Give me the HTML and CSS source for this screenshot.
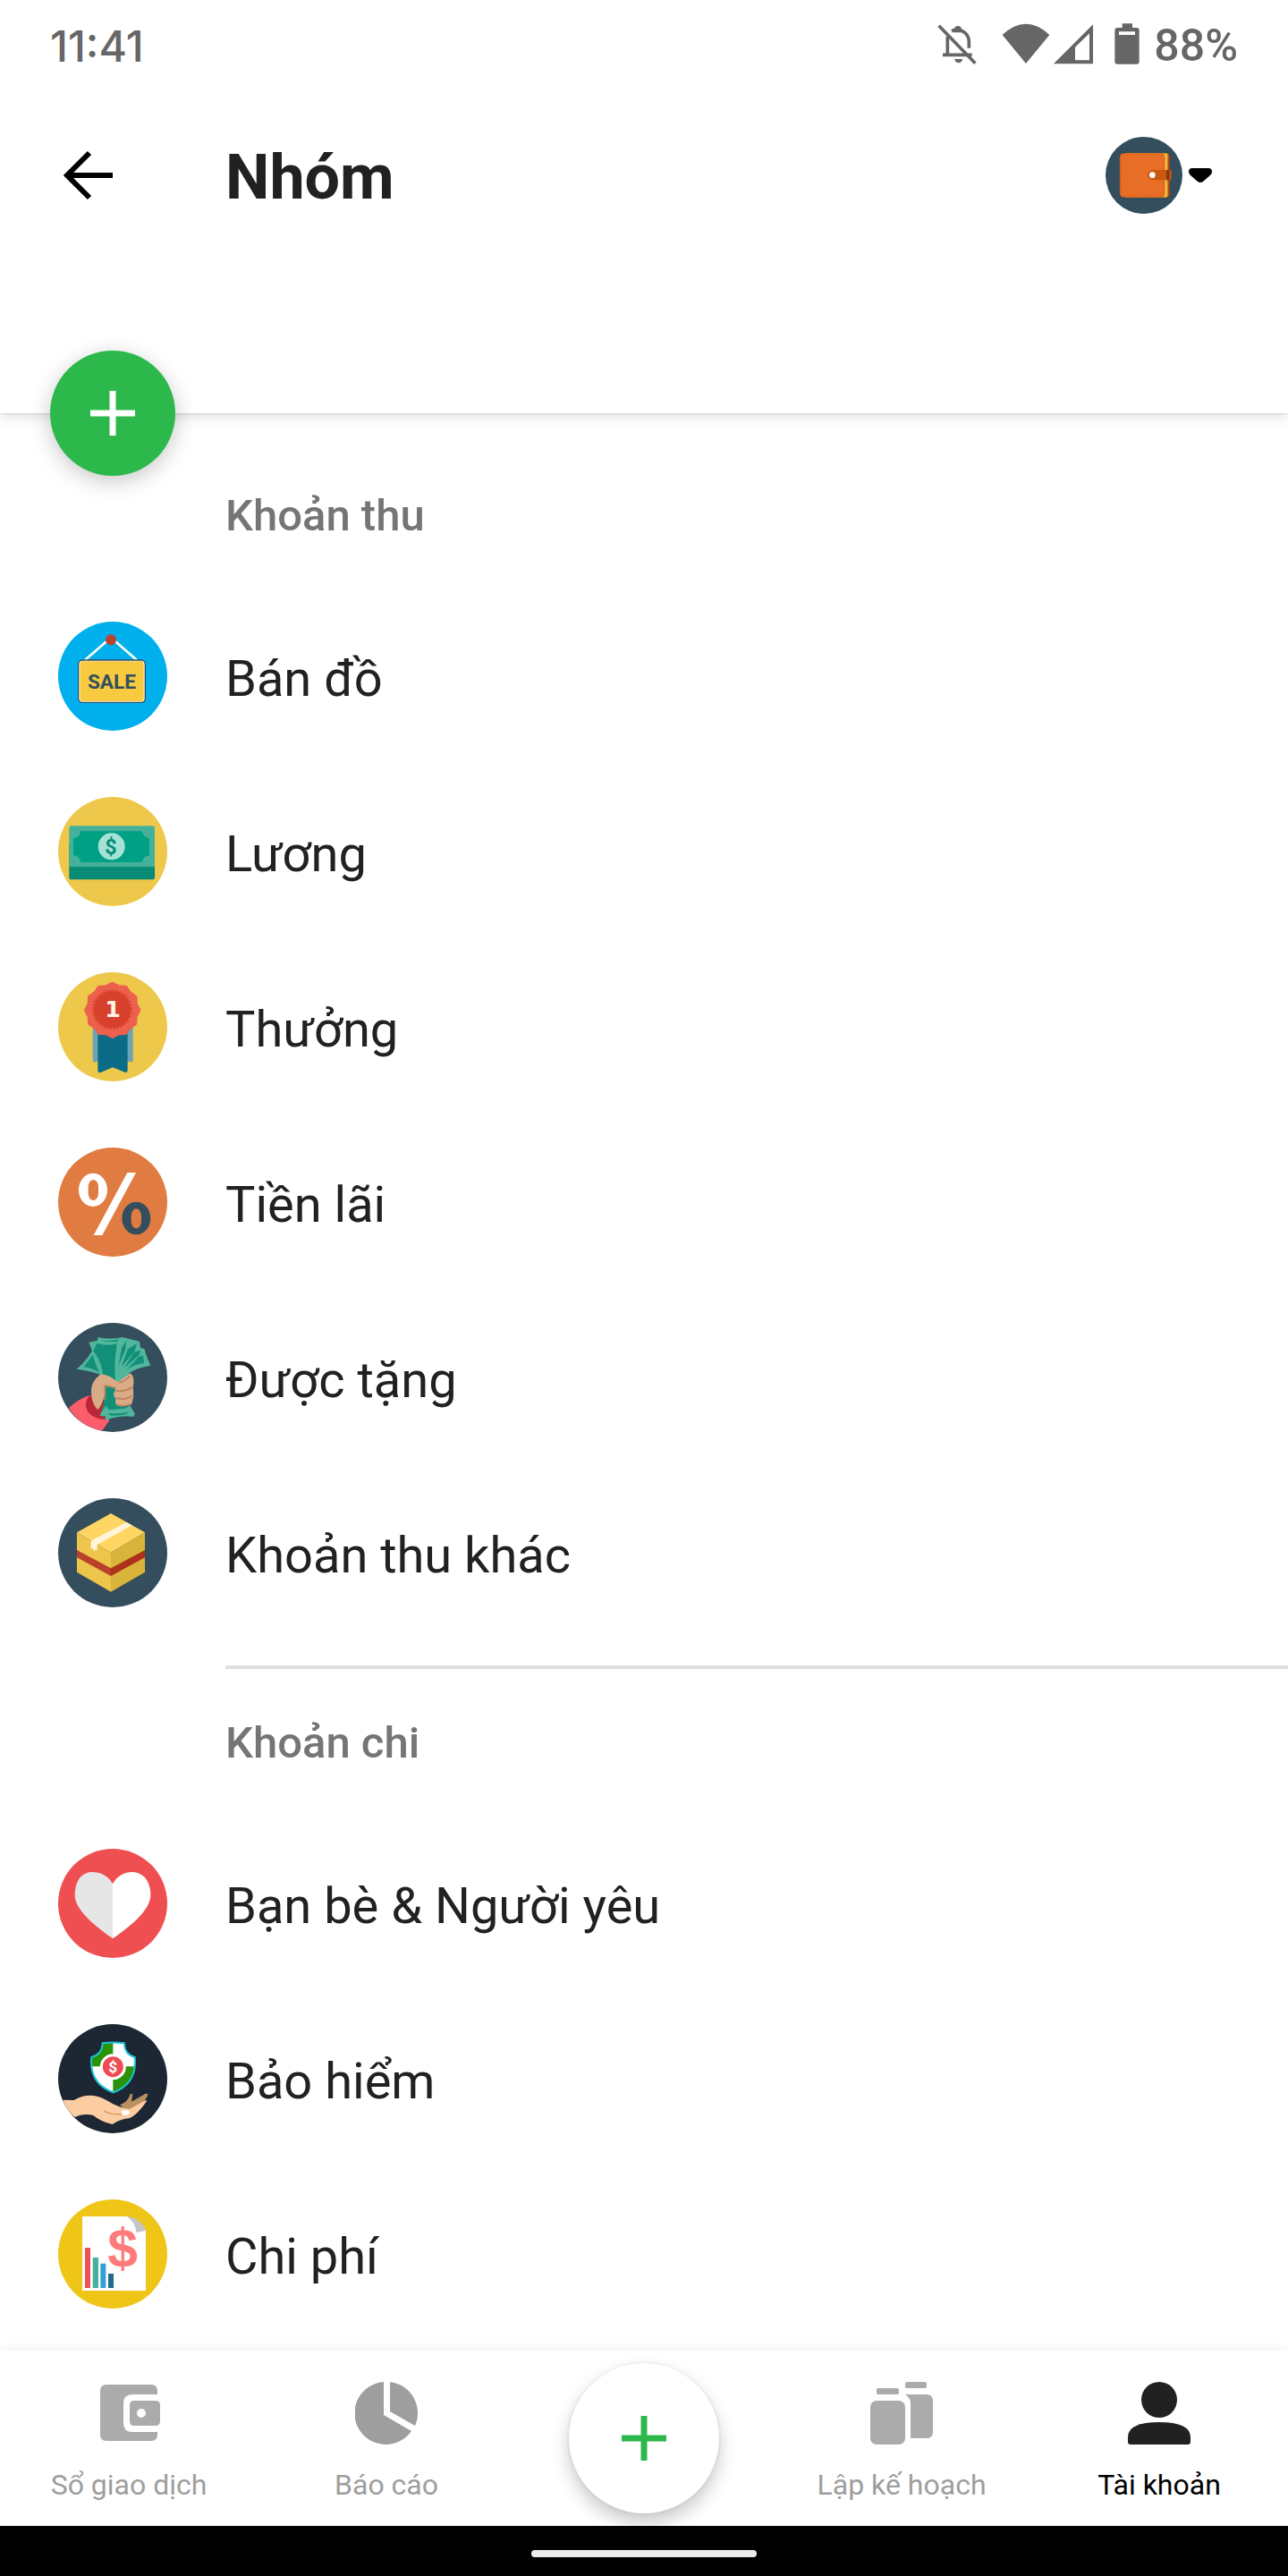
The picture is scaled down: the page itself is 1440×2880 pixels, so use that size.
FILE: index.html
```html
<!DOCTYPE html>
<html lang="vi">
<head>
<meta charset="utf-8">
<meta name="viewport" content="width=device-width, initial-scale=1">
<title>Nhóm</title>
<link rel="stylesheet" href="styles.css">
</head>
<body>
<header class="top">
  <div class="status">
    <time class="clock">11:41</time>
    <div class="status-icons">
      <svg class="bell" width="44" height="46" viewBox="0 0 132 138" fill="none" stroke="#666" stroke-width="11" aria-hidden="true"><path d="M5 8 127 134M34 44V106M18 106H116M48 26C75 12 106 33 106 62V83"/><path d="M56 22A12 12 0 0 1 82 22L86 31 52 31ZM58 120H84A13 13 0 0 1 58 120" fill="#666" stroke="none"/></svg>
      <svg class="wifi" width="54" height="46" viewBox="0 0 162 138" fill="#666" aria-hidden="true"><path d="M2 39Q81-34 160 39L81 135Z"/></svg>
      <svg class="signal" width="44" height="46" viewBox="0 0 132 138" fill="#666" aria-hidden="true"><path fill-rule="evenodd" d="M0 136 132 4V136ZM72 80V124H120V34Z"/></svg>
      <svg class="battery" width="28" height="46" viewBox="0 0 84 138" fill="#666" aria-hidden="true"><path fill-rule="evenodd" d="M26 1H60V15H74Q83 15 83 24V128Q83 137 74 137H10Q1 137 1 128V24Q1 15 10 15H26ZM15 28V39H69V28Z"/></svg>
      <span class="percent">88%</span>
    </div>
  </div>
  <div class="toolbar">
    <button class="icon-button" type="button" aria-label="Quay lại">
      <svg width="56" height="56" viewBox="0 0 56 56" fill="none" stroke="#000" stroke-width="6" aria-hidden="true"><path d="M56 28H6M30 3 5 28 30 53"/></svg>
    </button>
    <h1 class="title">Nhóm</h1>
    <button class="wallet-picker" type="button" aria-label="Chọn ví">
      <svg width="86" height="86" viewBox="648 459 258 258" aria-hidden="true">
        <circle cx="777" cy="588" r="129" fill="#354e5d"/>
        <rect x="720" y="514" width="143" height="148" rx="12" fill="#b9460e"/>
        <path d="M715 514H851Q857 514 857 524V652Q857 662 851 662H715Z" fill="#d8a52d"/>
        <path d="M850 516V660" stroke="#f2bd42" stroke-width="8"/>
        <rect x="697" y="515" width="149" height="146" rx="12" fill="#e96f28" stroke="#d45c18" stroke-width="2"/>
        <rect x="705" y="522" width="134" height="132" rx="10" fill="none" stroke="#d9621e" stroke-width="2" stroke-dasharray="5 3"/>
        <path d="M806 570H864Q869 570 869 576V598Q869 604 864 604H806A17 17 0 0 1 806 570" fill="#cc5710"/>
        <path d="M852 570H862V604H852Z" fill="#86390e"/><circle cx="805" cy="587" r="10" fill="#fff"/>
      </svg>
      <svg width="26" height="16" viewBox="0 0 26 16" aria-hidden="true"><path d="M4 0H22Q26 0 26 4 26 6 24 8L16 15Q13 17 10 15L2 8Q0 6 0 4 0 0 4 0"/></svg>
    </button>
  </div>
  <button class="add" type="button" aria-label="Thêm nhóm">
    <svg width="50" height="50" viewBox="0 0 50 50" stroke="#fff" stroke-width="7" aria-hidden="true"><path d="M25 0V50M0 25H50"/></svg>
  </button>
</header>

<main class="content">
  <section class="group">
    <h2 class="group-title">Khoản thu</h2>
    <ul class="list">
      <li><a class="row" href="#ban-do">
        <svg class="badge" viewBox="45 45 366 366" aria-hidden="true">
          <circle cx="228" cy="228" r="183" fill="#00b0ec"/>
          <path d="M135 174 222 98 309 174" fill="none" stroke="#fff" stroke-width="8"/>
          <circle cx="222" cy="106" r="18" fill="#ba4330"/>
          <rect x="113" y="174" width="224" height="142" rx="14" fill="#fff" stroke="#354e5d" stroke-width="4"/>
          <rect x="118" y="178" width="214" height="134" rx="10" fill="#f7ca40"/>
          <text class="sale" x="225" y="269" text-anchor="middle">SALE</text>
        </svg><span class="name">Bán đồ</span></a></li>
      <li><a class="row" href="#luong">
        <svg class="badge" viewBox="45 47 366 366" aria-hidden="true">
          <circle cx="228" cy="230" r="183" fill="#eec84b"/>
          <rect x="82" y="200" width="287" height="124" rx="8" fill="#008771"/>
          <path d="M83 289H368M83 298H368M83 307H368M83 316H368" stroke="#17967e" stroke-width="3"/>
          <path d="M90 144H361Q369 144 369 152V282H82V152Q82 144 90 144" fill="#46b19a"/>
          <path d="M121 162H327A25 25 0 0 0 351 185V243A25 25 0 0 0 327 266H121A25 25 0 0 0 96 243V185A25 25 0 0 0 121 162" fill="#00a084"/>
          <circle cx="224" cy="213" r="45" fill="#a5e3d8"/>
          <text class="dollar" x="222" y="238" font-size="70" fill="#078d76" text-anchor="middle">$</text>
        </svg><span class="name">Lương</span></a></li>
      <li><a class="row" href="#thuong">
        <svg class="badge" viewBox="45 51 366 366" aria-hidden="true">
          <circle cx="228" cy="234" r="183" fill="#eec84b"/>
          <path d="M161 220H296V344Q296 354 287 352L275 348H182L170 352Q161 354 161 344Z" fill="#69a4b8"/>
          <path d="M178 220H278V379Q278 389 268 386L228 370 188 387Q178 390 178 379Z" fill="#0b6c87"/>
          <path d="M227 90 248 101 271 102 284 121 303 134 304 157 315 178 304 199 303 222 284 235 271 254 248 255 227 266 206 255 183 254 170 235 151 222 150 199 139 178 150 157 151 134 170 121 183 102 206 101Z" fill="#ec604d" stroke="#ec604d" stroke-width="14" stroke-linejoin="round"/>
          <circle cx="226" cy="176" r="61" fill="#d7402b"/><circle cx="226" cy="176" r="63" fill="none" stroke="#d7402b" stroke-width="8" stroke-dasharray="6 5"/>
          <text class="first" x="228" y="202" text-anchor="middle">1</text>
        </svg><span class="name">Thưởng</span></a></li>
      <li><a class="row" href="#tien-lai">
        <svg class="badge" viewBox="45 39 366 366" aria-hidden="true">
          <circle cx="228" cy="222" r="183" fill="#e07c41"/>
          <path d="M277 123H306L193 333H164Z" fill="#fff"/>
          <ellipse cx="162" cy="181" rx="48" ry="56" fill="#fff"/><rect x="146" y="147" width="34" height="69" rx="17" ry="24" fill="#e07c41"/>
          <ellipse cx="307" cy="276" rx="48" ry="55" fill="#354e5d"/><rect x="290" y="244" width="34" height="66" rx="17" ry="24" fill="#e07c41"/>
        </svg><span class="name">Tiền lãi</span></a></li>
      <li><a class="row" href="#duoc-tang">
        <svg class="badge" viewBox="45 42 366 366" aria-hidden="true">
          <circle cx="228" cy="225" r="183" fill="#354e5d"/>
          <path d="M80 328Q113 296 151 285L217 370 192 404Q120 390 80 328" fill="#fc5d6b"/>
          <path d="M151 285Q128 310 144 340 165 366 207 366L196 300Z" fill="#b92736"/>
          <path d="M107 197Q141 169 159 136L148 107 178 101V90Q219 99 260 90L318 104 321 125 335 130Q338 149 355 185 307 192 284 210L239 290H196L183 214Q145 201 107 197" fill="#51b79c"/>
          <path d="M163 136 175 110Q212 122 242 111L240 130Q231 180 238 242L196 218Q191 171 163 136M131 190 161 149Q170 181 183 208 159 194 131 190M182 98Q220 107 250 97L242 105Q211 108 182 98M258 126 274 101 270 132 248 185ZM279 130 310 110 301 137 257 190ZM298 142 322 133 316 151 267 193ZM314 157 330 151 333 177Q300 181 274 200Z" fill="#128f79"/>
          <path d="M201 245H270L271 320 302 346 299 356Q244 351 203 369V355H184Q203 315 201 245" fill="#128f79"/>
          <path d="M204 320 215 334 270 329 286 319 302 346 299 356Q244 351 203 369L204 355 184 353Z" fill="#51b79c"/><path d="M214 344Q250 349 286 340L270 349Q239 355 218 352Z" fill="#128f79"/>
          <path d="M178 334Q154 309 156 266 158 238 184 217 201 211 220 223L246 240 287 211Q304 222 296 260 301 288 291 316 267 325 245 320 233 309 239 296 225 283 236 269L238 258 204 254Q202 307 178 334" fill="#d9aa86"/>
          <path d="M249 242Q267 241 287 219M238 269Q269 275 293 258M239 294Q270 303 293 286M202 300V252Q222 254 238 262M242 317Q266 324 291 314" fill="none" stroke="#b9825d" stroke-width="5"/>
        </svg><span class="name">Được tặng</span></a></li>
      <li><a class="row" href="#khoan-thu-khac">
        <svg class="badge" viewBox="45 45 366 366" aria-hidden="true">
          <circle cx="228" cy="228" r="183" fill="#354e5d"/>
          <path d="M222 96 336 160 222 227 108 160Z" fill="#ffd663"/>
          <path d="M108 160 222 227V359L108 293Z" fill="#eec54b"/><path d="M222 227 336 160V293L222 359Z" fill="#d9b43a"/>
          <path d="M108 219 222 280V306L108 244Z" fill="#b9412b"/><path d="M222 280 336 219V244L222 306Z" fill="#ac321c"/>
          <path d="M155 188 274 126 293 136 176 201V223L170 216 167 225 162 213 155 217Z" fill="#fff5d9"/>
        </svg><span class="name">Khoản thu khác</span></a></li>
    </ul>
  </section>

  <section class="group">
    <h2 class="group-title">Khoản chi</h2>
    <ul class="list">
      <li><a class="row" href="#ban-be">
        <svg class="badge" viewBox="45 51 366 366" aria-hidden="true">
          <circle cx="228" cy="234" r="183" fill="#ef4f50"/>
          <path d="M228 168C213 142 187 129 160 129 122 129 101 161 101 207 101 253 163 307 228 352Z" fill="#e6e6e6"/>
          <path d="M228 168C243 142 268 129 292 129 332 129 355 161 355 207 355 253 294 307 228 352Z" fill="#fff"/>
        </svg><span class="name">Bạn bè &amp; Người yêu</span></a></li>
      <li><a class="row" href="#bao-hiem">
        <svg class="badge" viewBox="45 39 366 366" aria-hidden="true">
          <circle cx="228" cy="222" r="183" fill="#1c2733"/>
          <path d="M194 103Q229 98 267 103 267 140 302 150 311 238 230 268 148 238 157 150 193 140 194 103" fill="#fff"/>
          <path d="M194 103Q212 100 229 101V181H157V150Q193 140 194 103M229 181H302Q298 245 229 267Z" fill="#2a9308"/>
          <path d="M194 103Q229 98 267 103 267 140 302 150 311 238 230 268 148 238 157 150 193 140 194 103Z" fill="none" stroke="#19c5db" stroke-width="6"/>
          <circle cx="229" cy="182" r="39" fill="#ef4b55" stroke="#fff" stroke-width="9"/>
          <text class="dollar" x="229" y="200" font-size="52" fill="#fff" text-anchor="middle">$</text>
          <path d="M252 310Q280 300 287 273L295 274 291 299 338 272 347 274Q330 318 272 328Z" fill="#bd9061"/>
          <path d="M61 293 98 294Q151 263 207 294 246 319 284 324L340 293 342 298Q310 344 285 354 249 359 227 375 187 366 163 345 128 336 101 351 73 328 61 293" fill="#fccca3"/>
          <path d="M199 330Q222 345 263 340" fill="none" stroke="#db9452" stroke-width="4"/><rect x="257" y="328" width="27" height="16" rx="7" fill="#fff"/>
        </svg><span class="name">Bảo hiểm</span></a></li>
      <li><a class="row" href="#chi-phi">
        <svg class="badge" viewBox="45 42 366 366" aria-hidden="true">
          <circle cx="228" cy="225" r="183" fill="#efc517"/>
          <path d="M126 99H276Q324 111 339 146V348H126Z" fill="#fff"/>
          <path d="M276 99Q324 106 339 146L307 153Q305 120 276 99" fill="#c5c5c5"/>
          <path d="M135 204H153V339H135Z" fill="#ef5052"/><path d="M161 237H180V339H161Z" fill="#45b29d"/><path d="M187 257H205V339H187Z" fill="#349fd7"/><path d="M213 291H231V339H213Z" fill="#226b8c"/>
          <text class="cost" x="261" y="266" text-anchor="middle">$</text>
        </svg><span class="name">Chi phí</span></a></li>
    </ul>
  </section>
</main>

<footer class="bottom">
  <nav class="tabs">
    <a class="tab" href="#so-giao-dich">
      <svg width="70" height="70" viewBox="0 0 70 70" fill="#ababab" aria-hidden="true"><path d="M10 3H60Q67 3 67 10V14H39Q29 14 29 24V46Q29 56 39 56H67V59Q67 66 60 66H10Q3 66 3 59V10Q3 3 10 3"/><path fill-rule="evenodd" d="M41 21H65Q70 21 70 26V44Q70 49 65 49H41Q36 49 36 44V26Q36 21 41 21M49 30A5 5 0 1 0 49 40 5 5 0 1 0 49 30"/></svg>
      <span>Sổ giao dịch</span></a>
    <a class="tab" href="#bao-cao">
      <svg width="70" height="70" viewBox="0 0 70 70" fill="#9e9e9e" aria-hidden="true"><path d="M32 0V37L63 55A35 35 0 1 1 32 0M39 0A35 35 0 0 1 67 49L39 33Z"/></svg>
      <span>Báo cáo</span></a>
    <button class="new" type="button" aria-label="Thêm giao dịch">
      <svg width="50" height="50" viewBox="0 0 50 50" stroke="#2db84c" stroke-width="7" aria-hidden="true"><path d="M25 0V50M0 25H50"/></svg>
    </button>
    <a class="tab" href="#lap-ke-hoach">
      <svg width="70" height="70" viewBox="0 0 70 70" fill="#ababab" aria-hidden="true"><rect y="21" width="39" height="49" rx="7"/><rect x="7" y="7" width="25" height="7" rx="2"/><rect x="39" width="24" height="7" rx="2"/><path d="M39 14H63Q70 14 70 21V56Q70 63 63 63H45V24Q45 18 39 14"/></svg>
      <span>Lập kế hoạch</span></a>
    <a class="tab active" href="#tai-khoan" aria-current="page">
      <svg width="70" height="70" viewBox="0 0 70 70" fill="#212121" aria-hidden="true"><circle cx="35" cy="20" r="20"/><path d="M0 67V62Q0 45 35 45T70 62V67Q70 70 67 70H3Q0 70 0 67"/></svg>
      <span>Tài khoản</span></a>
  </nav>
  <div class="gesture"><div class="gesture-bar"></div></div>
</footer>
</body>
</html>
```
FILE: styles.css
```css
* {
  box-sizing: border-box;
}

body {
  margin: 0;
  min-height: 100vh;
  display: flex;
  flex-direction: column;
  background: #fff;
  color: #212121;
  font-family: Roboto, "Noto Sans", sans-serif;
}

button {
  padding: 0;
  border: 0;
  background: none;
  color: inherit;
  font: inherit;
}

a {
  color: inherit;
  text-decoration: none;
}

svg {
  display: block;
  flex: none;
}

h1,
h2,
ul {
  margin: 0;
  padding: 0;
}

/* Header */
.top {
  position: relative;
  padding-bottom: 168px;
  background: #fff;
  box-shadow: 0 4px 14px rgba(0, 0, 0, 0.12), 0 1px 2px rgba(0, 0, 0, 0.1);
}

.status {
  display: flex;
  align-items: center;
  justify-content: space-between;
  height: 98px;
  padding: 0 56px;
  color: #666;
  font-size: 50px;
  font-weight: 500;
}

.clock {
  padding-top: 4px;
  font-family: Inter, sans-serif;
  font-size: 48px;
}

.status-icons {
  display: flex;
  align-items: center;
}

.percent {
  padding-top: 4px;
}

.wifi {
  margin-left: 28px;
}

.signal {
  margin-left: 4px;
}

.battery {
  margin: 0 16px 0 24px;
}

.toolbar {
  display: grid;
  grid-template-columns: 252px 1fr auto;
  align-items: center;
  height: 196px;
  padding-right: 85px;
}

.icon-button {
  display: flex;
  width: 56px;
  margin-left: 70px;
}

.title {
  padding-top: 4px;
  font-size: 70px;
  font-weight: 700;
  line-height: 84px;
}

.wallet-picker {
  display: flex;
  align-items: center;
  gap: 7px;
}

.add,
.new {
  display: flex;
  align-items: center;
  justify-content: center;
  border-radius: 50%;
}

.add {
  position: absolute;
  left: 56px;
  bottom: -70px;
  width: 140px;
  height: 140px;
  background: #2db84c;
  box-shadow: 0 6px 24px rgba(0, 0, 0, 0.22);
}

/* Category lists */
.content {
  flex: 1;
  padding-top: 28px;
}

.group + .group {
  margin-top: 28px;
}

.group-title {
  height: 168px;
  margin-left: 252px;
  border-top: 4px solid transparent;
  color: #757575;
  font-size: 49px;
  font-weight: 500;
  line-height: 166px;
}

.group + .group .group-title {
  border-top-color: #e0e0e0;
}

.list {
  list-style: none;
}

.row {
  display: grid;
  grid-template-columns: 252px 1fr;
  align-items: center;
  height: 196px;
  font-size: 56px;
}

.name {
  padding-top: 6px;
}

.badge {
  width: 122px;
  height: 122px;
  justify-self: center;
}

.sale {
  fill: #354e5d;
  font-size: 68px;
  font-weight: 700;
}

.dollar {
  font-weight: 700;
}

.first {
  fill: #fff5e3;
  font-family: "DejaVu Sans", sans-serif;
  font-size: 76px;
  font-weight: 700;
}

.cost {
  fill: #ff7b7b;
  font-family: "Liberation Sans", sans-serif;
  font-size: 182px;
  font-weight: 700;
}

/* Bottom navigation */
.tabs {
  display: grid;
  grid-template-columns: repeat(5, 1fr);
  height: 196px;
  background: #fff;
  box-shadow: 0 -2px 12px rgba(0, 0, 0, 0.06);
}

.tab {
  display: flex;
  flex-direction: column;
  align-items: center;
  gap: 25px;
  padding-top: 35px;
  color: #9e9e9e;
  font-size: 32px;
  line-height: 40px;
}

.active {
  color: #000;
}

.new {
  place-self: center;
  width: 168px;
  height: 168px;
  background: #fff;
  box-shadow: 0 10px 20px rgba(0, 0, 0, 0.22), 0 0 4px rgba(0, 0, 0, 0.08);
}

.gesture {
  position: relative;
  display: flex;
  justify-content: center;
  height: 56px;
  padding-top: 27px;
  background: #000;
}

.gesture-bar {
  width: 252px;
  height: 8px;
  border-radius: 4px;
  background: #ebebeb;
}
```
